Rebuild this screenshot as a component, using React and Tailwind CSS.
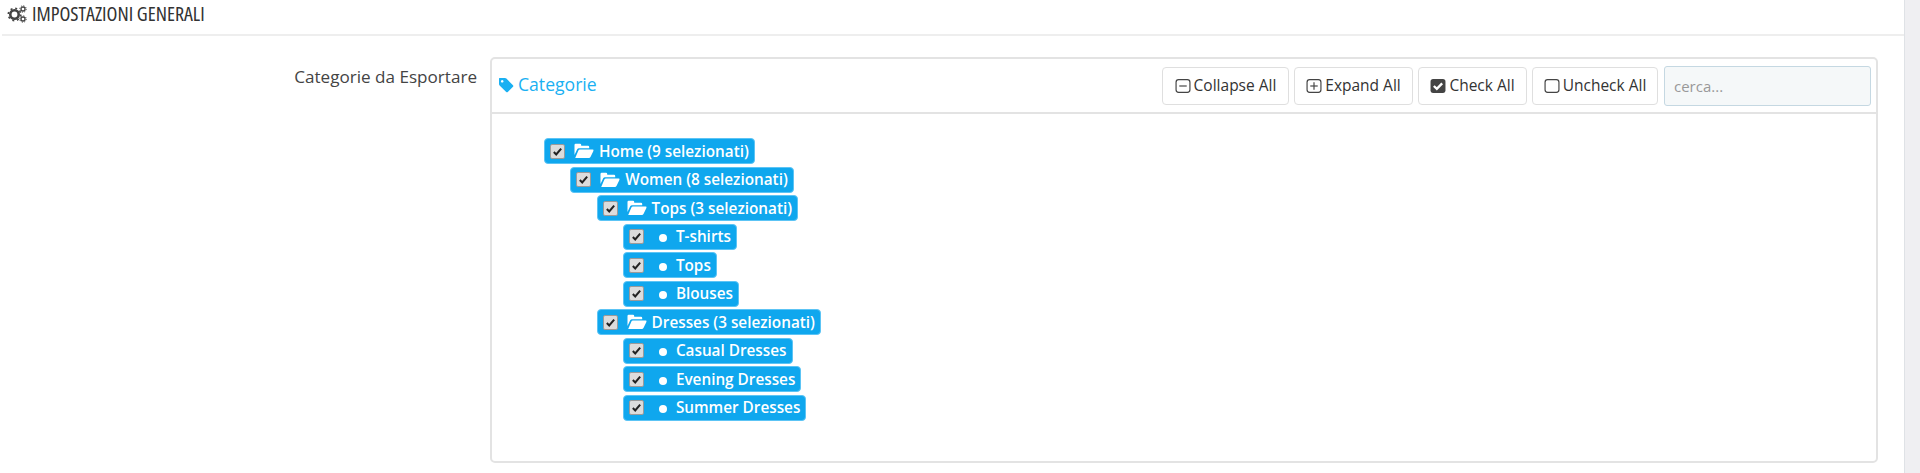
import React from 'react'

const FONT = { fontFamily: '"Open Sans", sans-serif' }

// Tree data, depth drives the indent via nested lists
const TREE = [
  {
    label: 'Home (9 selezionati)',
    children: [
      {
        label: 'Women (8 selezionati)',
        children: [
          {
            label: 'Tops (3 selezionati)',
            children: [{ label: 'T-shirts' }, { label: 'Tops' }, { label: 'Blouses' }],
          },
          {
            label: 'Dresses (3 selezionati)',
            children: [{ label: 'Casual Dresses' }, { label: 'Evening Dresses' }, { label: 'Summer Dresses' }],
          },
        ],
      },
    ],
  },
]

function Cogs() {
  return (
    <svg viewBox="0 0 20 18" className="w-[20px] h-[18px]" fill="#444">
      <circle cx="7.5" cy="9.5" r="4.2" fill="none" stroke="#444" strokeWidth="2.6" />
      <circle cx="7.5" cy="9.5" r="6.2" fill="none" stroke="#444" strokeWidth="1.6" strokeDasharray="2 2.87" />
      <circle cx="16" cy="4" r="2" fill="none" stroke="#444" strokeWidth="1.3" />
      <circle cx="16" cy="4" r="3.2" fill="none" stroke="#444" strokeWidth="1" strokeDasharray="1.2 1.3" />
      <circle cx="16" cy="14" r="2" fill="none" stroke="#444" strokeWidth="1.3" />
      <circle cx="16" cy="14" r="3.2" fill="none" stroke="#444" strokeWidth="1" strokeDasharray="1.2 1.3" />
    </svg>
  )
}

function Tag() {
  return (
    <svg viewBox="0 0 16 16" className="w-[16px] h-[16px]" fill="#1ab0f2">
      <path d="M1 1.5 Q1 1 1.5 1 H7 Q7.8 1 8.4 1.6 L15 8.2 Q15.7 9 15 9.8 L9.8 15 Q9 15.7 8.2 15 L1.6 8.4 Q1 7.8 1 7 Z M4.2 3 A1.3 1.3 0 1 0 4.21 3 Z" fillRule="evenodd" />
    </svg>
  )
}

function FolderOpen() {
  return (
    <svg viewBox="0 0 20 16" className="w-[20px] h-[16px]" fill="#fff">
      <path d="M0.5 12 V2 Q0.5 0.8 1.7 0.8 H6 Q7.2 0.8 7.2 2 V2.8 H14 Q15.2 2.8 15.2 4 V5.2 H5 Q3.8 5.2 3.2 6.3 Z" />
      <path d="M1.2 15 L4.4 7.6 Q4.8 6.6 6 6.6 H18.6 Q20 6.6 19.4 8 L16.6 13.8 Q16 15 14.8 15 Z" />
    </svg>
  )
}

function BoxIcon({ kind }) {
  return (
    <svg viewBox="0 0 15 15" className="w-[16px] h-[16px]" fill="none" stroke="#444" strokeWidth="1.1">
      <rect x="1" y="1.5" width="13" height="12" rx="2.4" />
      {kind !== 'empty' && <path d="M4 7.5 H11" />}
      {kind === 'plus' && <path d="M7.5 4 V11" />}
    </svg>
  )
}

function CheckedIcon() {
  return (
    <svg viewBox="0 0 15 15" className="w-[16px] h-[16px]">
      <rect x="0.5" y="1" width="14" height="13" rx="2.4" fill="#444" />
      <path d="M3.6 7.5 L6.4 10.2 L11.4 5" fill="none" stroke="#fff" strokeWidth="2.2" />
    </svg>
  )
}

function NodeBox() {
  return (
    <span className="flex items-center justify-center w-[15px] h-[15px] rounded-[2px] border-[1.5px] border-[#9a9a9a] bg-[#dcdcdc]">
      <svg viewBox="0 0 12 12" className="w-[11px] h-[11px]">
        <path d="M2 6.5 L4.6 9.2 L10 2.8" fill="none" stroke="#222" strokeWidth="2.2" />
      </svg>
    </span>
  )
}

function TreeNode({ node }) {
  const isLeaf = !node.children
  return (
    <li>
      <span className="inline-flex items-center h-[26px] mb-[2.55px] pl-[5px] pr-[5px] rounded-[4px] bg-[#0fa7ee] border border-[#5cc4f5] text-white text-[15.3px] font-semibold whitespace-nowrap align-top">
        <NodeBox />
        {isLeaf ? (
          <span className="w-[8px] h-[8px] rounded-full bg-white ml-[15px] mr-[9px] mt-[3px]" />
        ) : (
          <span className="ml-[9px] mr-[5px]">
            <FolderOpen />
          </span>
        )}
        {node.label}
      </span>
      {node.children && (
        <ul className="pl-[26.3px]">
          {node.children.map(child => (
            <TreeNode key={child.label} node={child} />
          ))}
        </ul>
      )}
    </li>
  )
}

function ToolButton({ icon, label, width }) {
  return (
    <button className={`flex items-center justify-center gap-[3px] h-[38px] rounded-[4px] border border-[#dfdfdf] bg-white text-[15.5px] text-[#333] ${width}`}>
      {icon}
      {label}
    </button>
  )
}

export default function App() {
  return (
    <div className="w-[1920px] h-[473px] bg-white overflow-hidden flex text-[#444]" style={FONT}>
      <div className="flex-1 min-w-0 pl-[2px]">
        {/* section heading */}
        <div className="flex items-center h-[36px] pl-[5px] pb-[7px] gap-[5px] border-b-2 border-[#eeeeee] text-[20px] text-[#333]">
          <Cogs />
          <span className="[font-stretch:75%]">IMPOSTAZIONI GENERALI</span>
        </div>

        <div className="flex pt-[21px]">
          <div className="w-[475px] text-right text-[17.1px] text-[#444] pt-[9px] leading-[22px]">Categorie da Esportare</div>

          {/* tree panel */}
          <div className="ml-[13px] w-[1388px] h-[406px] rounded-[5px] border-2 border-[#e3e3e3]">
            <div className="flex items-center h-[55px] border-b-2 border-[#e3e3e3] pl-[6px] pr-[5px] pb-[2px]">
              <Tag />
              <span className="ml-[4px] text-[17.6px] text-[#1ab0f2]">Categorie</span>
              <div className="ml-auto mt-[2px] flex items-center gap-[5px]">
                <ToolButton icon={<BoxIcon kind="minus" />} label="Collapse All" width="w-[127px]" />
                <ToolButton icon={<BoxIcon kind="plus" />} label="Expand All" width="w-[119px]" />
                <ToolButton icon={<CheckedIcon />} label="Check All" width="w-[109px]" />
                <ToolButton icon={<BoxIcon kind="empty" />} label="Uncheck All" width="w-[126px]" />
                <input
                  readOnly
                  placeholder="cerca..."
                  className="ml-[1px] w-[207px] h-[40px] px-[9px] rounded-[3px] border border-[#c5d8e2] bg-[#f5f8f9] text-[15px] placeholder:text-[#999]"
                />
              </div>
            </div>
            <ul className="pl-[52px] pt-[24px]">
              {TREE.map(node => (
                <TreeNode key={node.label} node={node} />
              ))}
            </ul>
          </div>
        </div>
      </div>
      <div className="w-[16px] bg-[#efeff2] border-l border-[#dfe2e6]" />
    </div>
  )
}
